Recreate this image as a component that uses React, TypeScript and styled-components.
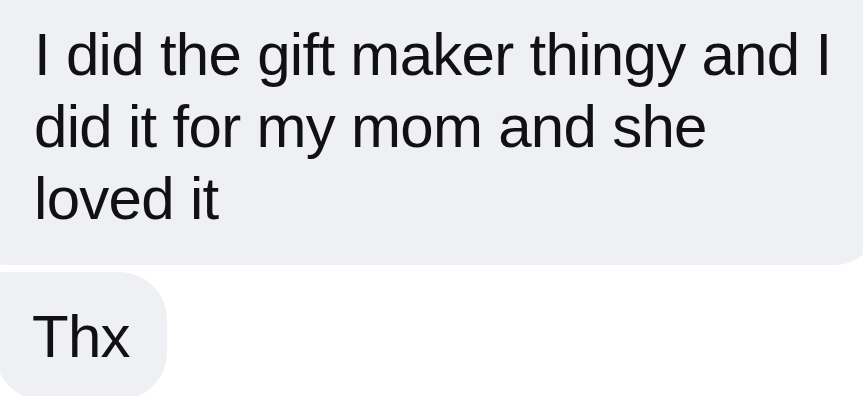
import React from 'react';
import styled, { createGlobalStyle } from 'styled-components';

const GlobalStyle = createGlobalStyle`
  html, body {
    margin: 0;
    padding: 0;
    background: #ffffff;
    overflow: hidden;
  }
  body {
    font-family: "Liberation Sans", Arial, sans-serif;
  }
`;

const Thread = styled.div`
  width: 863px;
  height: 396px;
  overflow: hidden;
  display: flex;
  flex-direction: column;
  align-items: flex-start;
  gap: 7px;
  background: #ffffff;
`;

const Bubble = styled.div<{ $wide?: boolean }>`
  flex-shrink: 0;
  background: #eff0f4;
  color: #111111;
  font-size: 60px;
  line-height: 72px;
  letter-spacing: -0.7px;
  white-space: nowrap;
  box-sizing: border-box;
  margin-left: ${({ $wide }) => ($wide ? '-40px' : '-5px')};
  border-radius: ${({ $wide }) => ($wide ? '46px' : '6px 48px 48px 48px')};
  width: ${({ $wide }) => ($wide ? '920px' : 'auto')};
  margin-top: ${({ $wide }) => ($wide ? '-40px' : '0')};
  padding: ${({ $wide }) => ($wide ? '59px 40px 30px 74px' : '29px 37px 27px 37px')};
`;

export default function App() {
  return (
    <>
      <GlobalStyle />
      <Thread>
        <Bubble $wide>
          I did the gift maker thingy and I
          <br />
          did it for my mom and she
          <br />
          loved it
        </Bubble>
        <Bubble>Thx</Bubble>
      </Thread>
    </>
  );
}
